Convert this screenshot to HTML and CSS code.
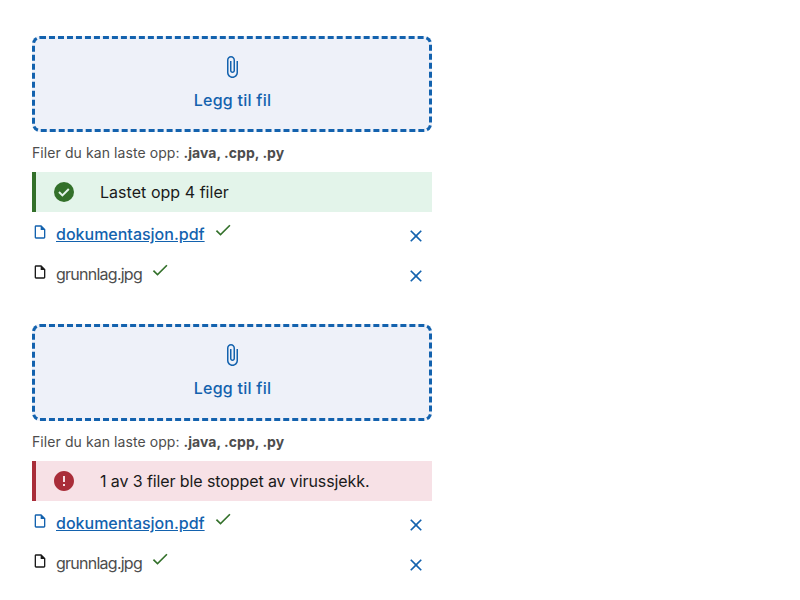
FILE: index.html
```html
<!DOCTYPE html>
<html lang="no">
<head>
<meta charset="utf-8">
<title>Filopplasting</title>
<link rel="stylesheet" href="styles.css">
</head>
<body>
<svg class="sprite" aria-hidden="true">
  <symbol id="attach" viewBox="0 0 24 24"><path d="M16.5 6v11.5c0 2.21-1.79 4-4 4s-4-1.79-4-4V5c0-1.38 1.12-2.5 2.5-2.5s2.5 1.12 2.5 2.5v10.5c0 .55-.45 1-1 1s-1-.45-1-1V6H10v9.5c0 1.38 1.12 2.5 2.5 2.5s2.5-1.12 2.5-2.5V5c0-2.21-1.79-4-4-4S7 2.79 7 5v12.5c0 3.04 2.46 5.5 5.5 5.5s5.5-2.46 5.5-5.5V6h-1.5z"/></symbol>
  <symbol id="file" viewBox="0 0 24 24"><path d="M14 2H6c-1.1 0-1.99.9-1.99 2L4 20c0 1.1.89 2 1.99 2H18c1.1 0 2-.9 2-2V8l-6-6zM6 20V4h7v5h5v11H6z"/></symbol>
  <symbol id="check" viewBox="0 0 24 24"><path d="M9 16.17 4.83 12l-1.42 1.41L9 19 21 7l-1.41-1.41z"/></symbol>
  <symbol id="close" viewBox="0 0 24 24"><path d="M19 6.41 17.59 5 12 10.59 6.41 5 5 6.41 10.59 12 5 17.59 6.41 19 12 13.41 17.59 19 19 17.59 13.41 12z"/></symbol>
  <symbol id="success" viewBox="0 0 24 24"><circle cx="12" cy="12" r="10"/><path d="m7 12 3.4 3.4 6.4-6.4" fill="none" stroke="#e3f4ea" stroke-width="2"/></symbol>
  <symbol id="error" viewBox="0 0 24 24"><path d="M12 2C6.48 2 2 6.48 2 12s4.48 10 10 10 10-4.48 10-10S17.52 2 12 2zm1 15h-2v-2h2v2zm0-4h-2V7h2v6z"/></symbol>
</svg>
<main class="page">
  <section class="uploader">
    <button class="dropzone"><svg class="icon-l"><use href="#attach"/></svg><span>Legg til fil</span></button>
    <p class="hint">Filer du kan laste opp: <b>.java, .cpp, .py</b></p>
    <div class="alert success"><svg class="icon-l"><use href="#success"/></svg><span>Lastet opp 4 filer</span></div>
    <ul class="files">
      <li class="file"><svg class="doc link-doc"><use href="#file"/></svg><a class="name" href="#">dokumentasjon.pdf</a><svg class="ok"><use href="#check"/></svg><button class="remove" aria-label="Fjern"><svg><use href="#close"/></svg></button></li>
      <li class="file"><svg class="doc"><use href="#file"/></svg><span class="name">grunnlag.jpg</span><svg class="ok"><use href="#check"/></svg><button class="remove" aria-label="Fjern"><svg><use href="#close"/></svg></button></li>
    </ul>
  </section>
  <section class="uploader">
    <button class="dropzone"><svg class="icon-l"><use href="#attach"/></svg><span>Legg til fil</span></button>
    <p class="hint">Filer du kan laste opp: <b>.java, .cpp, .py</b></p>
    <div class="alert error"><svg class="icon-l"><use href="#error"/></svg><span>1 av 3 filer ble stoppet av virussjekk.</span></div>
    <ul class="files">
      <li class="file"><svg class="doc link-doc"><use href="#file"/></svg><a class="name" href="#">dokumentasjon.pdf</a><svg class="ok"><use href="#check"/></svg><button class="remove" aria-label="Fjern"><svg><use href="#close"/></svg></button></li>
      <li class="file"><svg class="doc"><use href="#file"/></svg><span class="name">grunnlag.jpg</span><svg class="ok"><use href="#check"/></svg><button class="remove" aria-label="Fjern"><svg><use href="#close"/></svg></button></li>
    </ul>
  </section>
</main>
</body>
</html>
```
FILE: styles.css
```css
* { box-sizing: border-box; }
body { margin: 0; background: #fff; color: #1a1a1a; font: 16px/24px Inter, sans-serif; }
svg { fill: currentColor; flex: none; display: block; }
.sprite { position: absolute; width: 0; height: 0; }
.page { padding: 36px 32px 0; width: 464px; display: flex; flex-direction: column; gap: 32.4px; }
.uploader { height: 256px; }
.dropzone { width: 100%; height: 96.4px; padding: 16px 0 0; border: 3px dashed #1362ae; border-radius: 8px; background: #eef1f9; color: #1362ae; font: 500 16px/24px Inter, sans-serif; letter-spacing: .25px; display: flex; flex-direction: column; align-items: center; justify-content: flex-start; gap: 9px; }
.dropzone span { margin-left: 1px; }
.icon-l { width: 24px; height: 24px; }
.hint { margin: 10.9px 0 9.1px; font-size: 14px; line-height: 20px; color: #4d4d4d; letter-spacing: .08px; }
.hint b { font-weight: 700; letter-spacing: .03px; }
.alert { height: 40px; display: flex; align-items: center; gap: 24px; padding-left: 16px; border-left: 4px solid; }
.alert span { color: #1a1a1a; }
.success { background: #e3f4ea; color: #33702a; letter-spacing: .04px; }
.error { background: #f7e1e6; color: #a92d39; letter-spacing: -.1px; }
.files { list-style: none; margin: 0; padding: 0; }
.file { height: 40px; display: flex; align-items: flex-start; color: #4d4d4d; }
.doc { width: 16px; height: 16px; margin: 12px 8px 0 0; color: #1a1a1a; }
.link-doc { color: #1362ae; }
.name { margin-top: 10px; }
span.name { letter-spacing: -.75px; width: 86px; white-space: nowrap; }
a.name { color: #1362ae; font-weight: 500; text-decoration: underline; }
.ok { width: 20px; height: 20px; margin: 8px 0 0 8px; color: #33702a; }
.remove { margin: 8px 0 0 auto; padding: 6px; border: 0; background: none; color: #1362ae; }
.remove svg { width: 20px; height: 20px; }
```
